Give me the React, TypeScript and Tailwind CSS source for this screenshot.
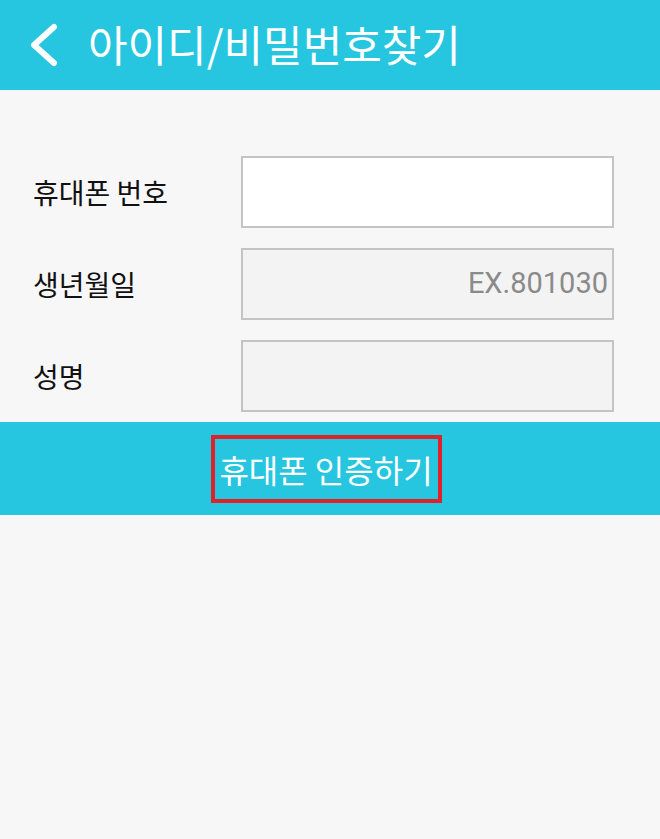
import React from 'react';

const font = { fontFamily: '"Noto Sans CJK KR", Roboto, sans-serif' };

const Field: React.FC<{ label: string; filled?: boolean; placeholder?: string }> = ({ label, filled, placeholder }) => (
    <div className="flex items-center h-[72px]">
        <div className="w-[241px] pl-[33px] text-[28px] text-[#111]">{label}</div>
        <div
            className={`w-[373px] h-[72px] border-2 border-[#c4c4c4] flex items-center justify-end pr-[4px] ${
                filled ? 'bg-white' : 'bg-[#f3f3f3]'
            }`}
        >
            {placeholder && (
                <span className="text-[29px] text-[#8a8a8a] font-['Roboto']">{placeholder}</span>
            )}
        </div>
    </div>
);

export default function App() {
    return (
        <div className="w-[660px] h-[839px] bg-[#f7f7f7] flex flex-col" style={font}>
            <div className="h-[90px] bg-[#26c6e0] flex items-center pl-[28px]">
                <svg width="32" height="44" viewBox="0 0 32 44" fill="none" stroke="white" strokeWidth="6" strokeLinecap="round" strokeLinejoin="round">
                    <polyline points="26,4 6,22 26,40" />
                </svg>
                <span className="ml-[28px] mb-[4px] text-[43px] text-white leading-none">아이디/비밀번호찾기</span>
            </div>
            <div className="pt-[66px] flex flex-col gap-[20px] pb-[10px]">
                <Field label="휴대폰 번호" filled />
                <Field label="생년월일" placeholder="EX.801030" />
                <Field label="성명" />
            </div>
            <div className="h-[93px] bg-[#26c6e0] flex items-center justify-center">
                <div className="mr-[8px] border-4 border-[#e0202a] h-[68px] w-[231px] flex items-center justify-center">
                    <span className="text-[32px] text-white whitespace-nowrap">휴대폰 인증하기</span>
                </div>
            </div>
        </div>
    );
}
